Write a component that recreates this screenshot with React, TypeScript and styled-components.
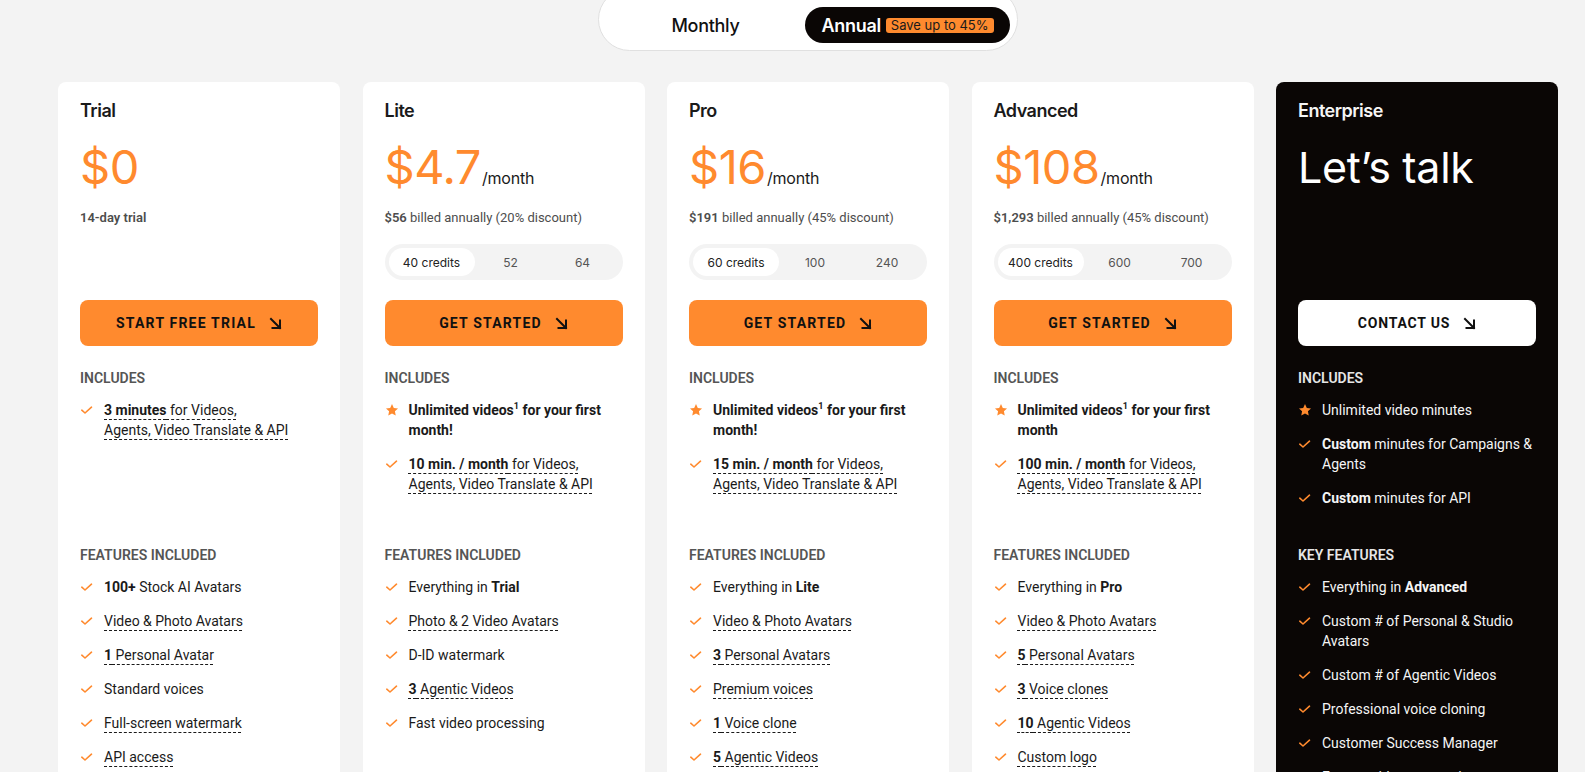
import React from "react"
import styled, {createGlobalStyle} from "styled-components"

const ORANGE = "#ff8a2e"

const GlobalStyle = createGlobalStyle`
  html, body {
    margin: 0;
    padding: 0;
    background: #f3f3f3;
  }
  body {
    font-family: Roboto, "Liberation Sans", Arial, sans-serif;
    color: #1a1a1a;
    overflow: hidden;
  }
  * { box-sizing: border-box; }
`

const Page = styled.div`
  padding: 0 25px 40px 58px;
`

const ToggleRow = styled.div`
  display: flex;
  justify-content: center;
  padding-right: 2px;
  margin-bottom: 31px;
`

const Toggle = styled.div`
  margin-top: -12px;
  height: 63px;
  width: 420px;
  padding: 18px 7px 7px;
  border: 1px solid #e0e0e0;
  border-radius: 32px;
  background: #fff;
  display: grid;
  grid-template-columns: 1fr 205px;
`

const ToggleOption = styled.div<{$active?: boolean}>`
  display: flex;
  align-items: center;
  justify-content: center;
  gap: 5px;
  border-radius: 19px;
  font-family: Inter, "Noto Sans", sans-serif;
  font-size: 18px;
  font-weight: ${p => (p.$active ? 600 : 500)};
  letter-spacing: -0.3px;
  background: ${p => (p.$active ? "#0a0605" : "transparent")};
  color: ${p => (p.$active ? "#fff" : "#111")};
`

const Badge = styled.span`
  background: ${ORANGE};
  color: #1a1a1a;
  font-size: 13px;
  font-weight: 400;
  line-height: 15px;
  letter-spacing: 0;
  padding: 0 5px;
  border-radius: 3px;
`

const CardGrid = styled.div`
  display: grid;
  grid-template-columns: repeat(5, 282px);
  gap: 22.5px;
  align-items: start;
`

const Card = styled.div<{$dark?: boolean}>`
  background: ${p => (p.$dark ? "#0a0605" : "#fff")};
  color: ${p => (p.$dark ? "#f5f5f5" : "#1a1a1a")};
  border-radius: 8px;
  padding: 17px 22px 60px;
  min-height: 760px;
  display: flex;
  flex-direction: column;
`

const PlanName = styled.div`
  font-family: Inter, "Noto Sans", sans-serif;
  font-size: 18px;
  font-weight: 600;
  letter-spacing: -0.5px;
  line-height: 24px;
`

const PriceRow = styled.div`
  margin-top: 14px;
  height: 60px;
  display: flex;
  align-items: baseline;
  gap: 1px;
  line-height: 60px;
`

const Price = styled.span`
  font-family: Inter, "Noto Sans", sans-serif;
  font-size: 47px;
  font-weight: 400;
  letter-spacing: -0.5px;
  color: ${ORANGE};
`

const Per = styled.span`
  font-family: Inter, "Noto Sans", sans-serif;
  font-size: 16px;
  letter-spacing: -0.2px;
  color: #1a1a1a;
`

const Talk = styled.span`
  font-family: Inter, "Noto Sans", sans-serif;
  font-size: 43px;
  font-weight: 400;
  letter-spacing: -0.3px;
  color: #fff;
`

const Billed = styled.div`
  margin-top: 12px;
  min-height: 18px;
  font-size: 13px;
  line-height: 18px;
  color: #4d4d4d;

  b {
    font-weight: 600;
  }
`

const CreditSelector = styled.div`
  margin-top: 17px;
  height: 36px;
  padding: 4px;
  border-radius: 18px;
  background: #f3f3f3;
  display: grid;
  grid-template-columns: 86px 1fr 1fr;
`

const CreditSpacer = styled.div`
  margin-top: 17px;
  height: 36px;
`

const CreditOption = styled.div<{$active?: boolean}>`
  display: flex;
  align-items: center;
  justify-content: center;
  border-radius: 15px;
  font-family: Inter, "Noto Sans", sans-serif;
  font-size: 12px;
  color: ${p => (p.$active ? "#222" : "#555")};
  background: ${p => (p.$active ? "#fff" : "transparent")};
`

const CtaButton = styled.button<{$dark?: boolean}>`
  margin-top: 20px;
  height: 46px;
  width: 100%;
  border: none;
  border-radius: 8px;
  background: ${p => (p.$dark ? "#fff" : ORANGE)};
  color: #111;
  display: flex;
  align-items: center;
  justify-content: center;
  gap: 13px;
  font-family: Roboto, "Liberation Sans", sans-serif;
  font-size: 14px;
  font-weight: 700;
  letter-spacing: ${p => (p.$dark ? "0.8px" : "1.2px")};
  cursor: pointer;
`

const SectionTitle = styled.div<{$dark?: boolean}>`
  font-size: 14px;
  font-weight: 600;
  line-height: 16px;
  color: ${p => (p.$dark ? "#e6e6e6" : "#555")};
  text-transform: uppercase;
`

const IncludesBlock = styled.div`
  margin-top: 24px;
  min-height: 177px;
`

const List = styled.ul`
  list-style: none;
  margin: 14px 0 0;
  padding: 0;
  display: flex;
  flex-direction: column;
  gap: 14px;
`

const Item = styled.li`
  display: flex;
  align-items: flex-start;
  gap: 8px;
  font-size: 14px;
  line-height: 20px;
`

const IconBox = styled.span`
  flex: 0 0 16px;
  height: 20px;
  display: flex;
  align-items: center;
  justify-content: flex-start;
`

const ItemText = styled.span`
  sup {
    font-size: 9px;
    line-height: 0;
    vertical-align: 6px;
  }
`

const B = styled.b`
  font-weight: 700;
`

const U = styled.span`
  text-decoration: underline dashed currentColor;
  text-decoration-thickness: 1px;
  text-underline-offset: 4px;
`

const Check = () => (
  <svg width="14" height="12" viewBox="0 0 14 12" fill="none">
    <path d="M1.8 6.2 L5 9 L11.5 3.2" stroke={ORANGE} strokeWidth="1.6" strokeLinecap="round" strokeLinejoin="round" />
  </svg>
)

const Star = () => (
  <svg width="14" height="14" viewBox="0 0 24 24">
    <path
      d="M12 1.8l3.1 6.6 7.2.9-5.3 5 1.4 7.1L12 17.9l-6.4 3.5 1.4-7.1-5.3-5 7.2-.9z"
      fill={ORANGE}
    />
  </svg>
)

const Arrow = () => (
  <svg width="13" height="13" viewBox="0 0 13 13" fill="none">
    <path d="M2 2 L11 11 M11 3.5 V11 H3.5" stroke="#111" strokeWidth="2" strokeLinecap="square" />
  </svg>
)

type Feature = {star?: boolean; content: React.ReactNode}

type Plan = {
  name: string
  price?: string
  per?: boolean
  billed?: React.ReactNode
  credits?: string[]
  cta: string
  dark?: boolean
  includes: Feature[]
  featuresTitle: string
  features: Feature[]
}

const minutesLine = (amount: string, breakAfterVideos = false) => (
  <U>
    <B>{amount}</B> for Videos,{breakAfterVideos ? <br /> : " "}Agents, Video Translate &amp; API
  </U>
)

const unlimited = (suffix: string) => (
  <B>
    Unlimited videos<sup>1</sup> for your first {suffix}
  </B>
)

const plans: Plan[] = [
  {
    name: "Trial",
    price: "$0",
    billed: <b>14-day trial</b>,
    cta: "START FREE TRIAL",
    includes: [{content: minutesLine("3 minutes", true)}],
    featuresTitle: "Features included",
    features: [
      {content: <><B>100+</B> Stock AI Avatars</>},
      {content: <U>Video &amp; Photo Avatars</U>},
      {content: <U><B>1</B> Personal Avatar</U>},
      {content: "Standard voices"},
      {content: <U>Full-screen watermark</U>},
      {content: <U>API access</U>}
    ]
  },
  {
    name: "Lite",
    price: "$4.7",
    per: true,
    billed: <><b>$56</b> billed annually (20% discount)</>,
    credits: ["40 credits", "52", "64"],
    cta: "GET STARTED",
    includes: [
      {star: true, content: unlimited("month!")},
      {content: minutesLine("10 min. / month")}
    ],
    featuresTitle: "Features included",
    features: [
      {content: <>Everything in <B>Trial</B></>},
      {content: <U>Photo &amp; 2 Video Avatars</U>},
      {content: "D-ID watermark"},
      {content: <U><B>3</B> Agentic Videos</U>},
      {content: "Fast video processing"}
    ]
  },
  {
    name: "Pro",
    price: "$16",
    per: true,
    billed: <><b>$191</b> billed annually (45% discount)</>,
    credits: ["60 credits", "100", "240"],
    cta: "GET STARTED",
    includes: [
      {star: true, content: unlimited("month!")},
      {content: minutesLine("15 min. / month")}
    ],
    featuresTitle: "Features included",
    features: [
      {content: <>Everything in <B>Lite</B></>},
      {content: <U>Video &amp; Photo Avatars</U>},
      {content: <U><B>3</B> Personal Avatars</U>},
      {content: <U>Premium voices</U>},
      {content: <U><B>1</B> Voice clone</U>},
      {content: <U><B>5</B> Agentic Videos</U>}
    ]
  },
  {
    name: "Advanced",
    price: "$108",
    per: true,
    billed: <><b>$1,293</b> billed annually (45% discount)</>,
    credits: ["400 credits", "600", "700"],
    cta: "GET STARTED",
    includes: [
      {star: true, content: unlimited("month")},
      {content: minutesLine("100 min. / month")}
    ],
    featuresTitle: "Features included",
    features: [
      {content: <>Everything in <B>Pro</B></>},
      {content: <U>Video &amp; Photo Avatars</U>},
      {content: <U><B>5</B> Personal Avatars</U>},
      {content: <U><B>3</B> Voice clones</U>},
      {content: <U><B>10</B> Agentic Videos</U>},
      {content: <U>Custom logo</U>}
    ]
  },
  {
    name: "Enterprise",
    cta: "CONTACT US",
    dark: true,
    includes: [
      {star: true, content: "Unlimited video minutes"},
      {content: <><B>Custom</B> minutes for Campaigns &amp; Agents</>},
      {content: <><B>Custom</B> minutes for API</>}
    ],
    featuresTitle: "Key features",
    features: [
      {content: <>Everything in <B>Advanced</B></>},
      {content: "Custom # of Personal & Studio Avatars"},
      {content: "Custom # of Agentic Videos"},
      {content: "Professional voice cloning"},
      {content: "Customer Success Manager"},
      {content: "Fastest video processing"}
    ]
  }
]

const FeatureList: React.FC<{items: Feature[]}> = ({items}) => (
  <List>
    {items.map((f, i) => (
      <Item key={i}>
        <IconBox>{f.star ? <Star /> : <Check />}</IconBox>
        <ItemText>{f.content}</ItemText>
      </Item>
    ))}
  </List>
)

const PlanCard: React.FC<{plan: Plan}> = ({plan}) => (
  <Card $dark={plan.dark}>
    <PlanName>{plan.name}</PlanName>
    <PriceRow>
      {plan.dark ? (
        <Talk>Let’s talk</Talk>
      ) : (
        <>
          <Price>{plan.price}</Price>
          {plan.per && <Per>/month</Per>}
        </>
      )}
    </PriceRow>
    <Billed>{plan.billed}</Billed>
    {plan.credits ? (
      <CreditSelector>
        {plan.credits.map((c, i) => (
          <CreditOption key={c} $active={i === 0}>
            {c}
          </CreditOption>
        ))}
      </CreditSelector>
    ) : (
      <CreditSpacer />
    )}
    <CtaButton $dark={plan.dark}>
      {plan.cta}
      <Arrow />
    </CtaButton>
    <IncludesBlock>
      <SectionTitle $dark={plan.dark}>Includes</SectionTitle>
      <FeatureList items={plan.includes} />
    </IncludesBlock>
    <SectionTitle $dark={plan.dark}>{plan.featuresTitle}</SectionTitle>
    <FeatureList items={plan.features} />
  </Card>
)

const App: React.FC = () => {
  return (
    <>
      <GlobalStyle />
      <Page>
        <ToggleRow>
          <Toggle>
            <ToggleOption>Monthly</ToggleOption>
            <ToggleOption $active>
              Annual
              <Badge>Save up to 45%</Badge>
            </ToggleOption>
          </Toggle>
        </ToggleRow>
        <CardGrid>
          {plans.map(p => (
            <PlanCard key={p.name} plan={p} />
          ))}
        </CardGrid>
      </Page>
    </>
  )
}

export default App
